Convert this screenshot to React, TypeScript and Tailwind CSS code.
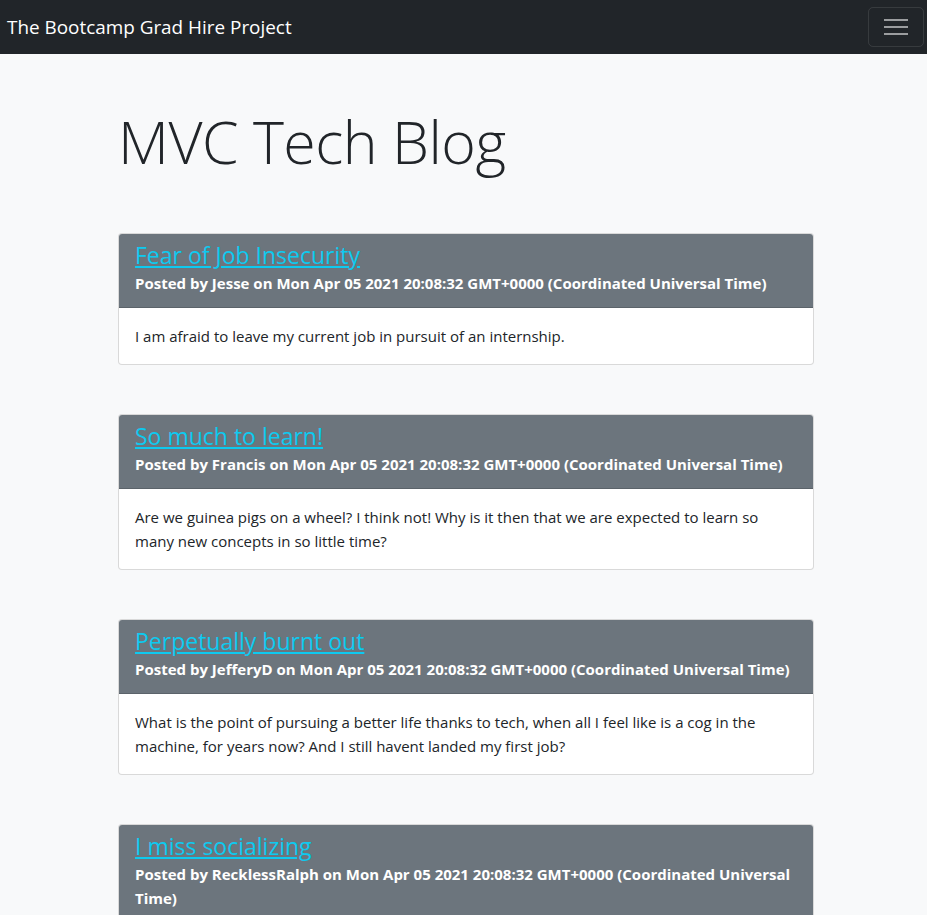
import React from "react";

const posts = [
  {
    title: "Fear of Job Insecurity",
    author: "Jesse",
    body: "I am afraid to leave my current job in pursuit of an internship.",
  },
  {
    title: "So much to learn!",
    author: "Francis",
    body: "Are we guinea pigs on a wheel? I think not! Why is it then that we are expected to learn so many new concepts in so little time?",
  },
  {
    title: "Perpetually burnt out",
    author: "JefferyD",
    body: "What is the point of pursuing a better life thanks to tech, when all I feel like is a cog in the machine, for years now? And I still havent landed my first job?",
  },
  {
    title: "I miss socializing",
    author: "RecklessRalph",
    body: "Zoom calls just are not the same as meeting people in person. I miss going out for coffee with my classmates after class.",
  },
];

const date = "Mon Apr 05 2021 20:08:32 GMT+0000 (Coordinated Universal Time)";

const App = () => {
  return (
    <div className="min-h-screen bg-[#f8f9fa] font-['Open_Sans',sans-serif] text-[#212529]">
      {/* Navbar */}
      <nav className="h-[54px] bg-[#212529] flex items-center justify-between pl-[7px] pr-[3px]">
        <a href="#" className="text-white text-[18.9px] leading-[30px]">
          The Bootcamp Grad Hire Project
        </a>
        <button className="w-[56px] h-[40px] border border-white/10 rounded-[5px] flex flex-col items-center justify-center gap-[5px]">
          <span className="block w-[24px] h-[2px] bg-white/55"></span>
          <span className="block w-[24px] h-[2px] bg-white/55"></span>
          <span className="block w-[24px] h-[2px] bg-white/55"></span>
        </button>
      </nav>

      <div className="w-[696px] ml-[118px] pb-10">
        {/* Heading */}
        <h1 className="text-[59px] font-light leading-[74px] mt-[50px] mb-[55px] tracking-[-0.5px]">
          MVC Tech Blog
        </h1>

        {/* Posts */}
        <div className="flex flex-col gap-[49px]">
          {posts.map((post) => (
            <div
              key={post.title}
              className="bg-white border border-black/15 rounded-[4px] overflow-hidden"
            >
              <div className="bg-[#6c757d] px-4 pt-[7px] pb-[12px] border-b border-black/15">
                <h4 className="text-[23px] leading-[28px] mb-[2px]">
                  <a href="#" className="text-[#0dcaf0] underline">
                    {post.title}
                  </a>
                </h4>
                <h6 className="text-white text-[15px] font-bold leading-[24px]">
                  Posted by {post.author} on {date}
                </h6>
              </div>
              <div className="p-4 text-[15px] leading-[24px]">{post.body}</div>
            </div>
          ))}
        </div>
      </div>
    </div>
  );
};

export default App;
